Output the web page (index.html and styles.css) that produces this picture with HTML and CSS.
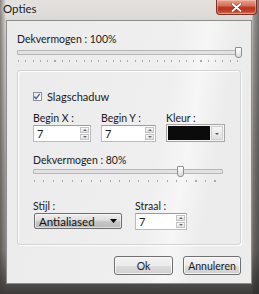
FILE: index.html
```html
<!DOCTYPE html>
<html lang="nl">
<head>
    <meta charset="UTF-8">
    <title>Opties</title>
    <link rel="stylesheet" href="styles.css">
</head>
<body>
    <div class="window">
        <div class="titlebar">
            <span class="title">Opties</span>
            <button class="close" type="button" aria-label="Sluiten">
                <svg width="11" height="9" viewBox="0 0 11 9">
                    <path d="M1.5 1 L9.5 8 M9.5 1 L1.5 8" stroke="#5a1a10" stroke-width="3" stroke-linecap="round" opacity="0.5"/>
                    <path d="M1.5 1 L9.5 8 M9.5 1 L1.5 8" stroke="#ffffff" stroke-width="1.8" stroke-linecap="round"/>
                </svg>
            </button>
        </div>

        <div class="client">
            <label class="caption">Dekvermogen : 100%</label>
            <div class="slider slider-wide">
                <div class="track"></div>
                <div class="thumb" style="left: 218px;"></div>
            </div>
            <div class="ticks ticks-wide"></div>

            <div class="group">
                <label class="check-row">
                    <span class="checkbox">
                        <svg width="9" height="9" viewBox="0 0 9 9"><path d="M1.5 4.5 L3.5 7 L7.5 1.5" stroke="#3a5f9a" stroke-width="1.4" fill="none"/></svg>
                    </span>
                    Slagschaduw
                </label>

                <div class="fields">
                    <div class="field">
                        <label class="caption">Begin X :</label>
                        <div class="spin spin-x">
                            <span class="value">7</span>
                            <span class="arrows"><i class="up"></i><i class="down"></i></span>
                        </div>
                    </div>
                    <div class="field">
                        <label class="caption">Begin Y :</label>
                        <div class="spin spin-y">
                            <span class="value">7</span>
                            <span class="arrows"><i class="up"></i><i class="down"></i></span>
                        </div>
                    </div>
                    <div class="field">
                        <label class="caption">Kleur :</label>
                        <div class="color-combo">
                            <span class="swatch"></span>
                            <span class="drop"><i class="down"></i></span>
                        </div>
                    </div>
                </div>

                <label class="caption caption-opacity">Dekvermogen : 80%</label>
                <div class="slider slider-inner">
                    <div class="track"></div>
                    <div class="thumb" style="left: 144px;"></div>
                </div>
                <div class="ticks ticks-inner"></div>

                <div class="fields fields-bottom">
                    <div class="field">
                        <label class="caption">Stijl :</label>
                        <div class="select">
                            <span>Antialiased</span>
                            <svg width="7" height="4" viewBox="0 0 7 4"><path d="M0 0 H7 L3.5 4 Z" fill="#000"/></svg>
                        </div>
                    </div>
                    <div class="field">
                        <label class="caption">Straal :</label>
                        <div class="spin spin-r">
                            <span class="value">7</span>
                            <span class="arrows"><i class="up"></i><i class="down"></i></span>
                        </div>
                    </div>
                </div>
            </div>

            <div class="actions">
                <button class="btn" type="button">Ok</button>
                <button class="btn" type="button">Annuleren</button>
            </div>
        </div>
    </div>
</body>
</html>
```

FILE: styles.css
```css
body {
    margin: 0;
    padding: 0;
    font-family: Lato, "Open Sans", sans-serif;
    font-size: 10.5px;
    color: #1a1a1a;
}
.window {
    width: 259px;
    height: 294px;
    box-sizing: border-box;
    padding: 0 7px 10px 6px;
    background:
        linear-gradient(90deg, rgba(60, 55, 50, 0.55) 0, rgba(60, 55, 50, 0.1) 5px, transparent 6px, transparent 252px, rgba(40, 40, 40, 0.35) 253px, rgba(40, 40, 40, 0.6) 259px),
        linear-gradient(180deg, #e4e2de 0, #d2cfcb 40px, #a9a5a1 150px, #8a8683 250px, #3c3b3a 294px);
    display: flex;
    flex-direction: column;
}
.titlebar {
    height: 20px;
    display: flex;
    align-items: flex-start;
    justify-content: space-between;
}
.title {
    font-size: 11.5px;
    margin: 2px 0 0 -3px;
    color: #1b1b1b;
    text-shadow: 0 0 6px rgba(255, 255, 255, 0.9);
}
.close {
    width: 41px;
    height: 15px;
    margin-right: -5px;
    padding: 0;
    border: 1px solid #7d3024;
    border-top: none;
    border-radius: 0 0 4px 4px;
    background: linear-gradient(180deg, #e7a291 0, #d4705a 40%, #b9341a 55%, #c2412a 80%, #d97459 100%);
    box-shadow: inset 0 0 0 1px rgba(255, 220, 210, 0.4);
    display: flex;
    align-items: center;
    justify-content: center;
}
.client {
    flex: 1;
    border: 1px solid #8c8c8c;
    background: linear-gradient(100deg, #ebebeb 0, #efefef 60%, #f6f6f6 70%, #ececec 80%);
    padding: 12px 9px 0 10px;
    display: flex;
    flex-direction: column;
}
.caption {
    display: block;
    line-height: 13px;
    height: 13px;
}
.caption-opacity {
    margin-top: 12px;
}
.slider {
    position: relative;
    height: 12px;
}
.slider-wide {
    width: 224px;
    margin-top: 1px;
}
.slider-inner {
    width: 190px;
    margin-top: -1px;
}
.track {
    position: absolute;
    left: 0;
    right: 0;
    top: 3px;
    height: 3px;
    border: 1px solid #b6b6b6;
    border-radius: 1px;
    background: #e2e2e2;
}
.thumb {
    position: absolute;
    top: 0;
    width: 5px;
    height: 9px;
    border: 1px solid #8e8e8e;
    border-radius: 1px 1px 3px 3px;
    background: linear-gradient(180deg, #ffffff, #dcdcdc);
}
.ticks {
    height: 2px;
    margin-top: 1px;
    background: repeating-linear-gradient(90deg, #a9a9a9 0, #a9a9a9 1px, transparent 1px, transparent 7.3px);
}
.ticks-wide {
    width: 222px;
    margin-left: 1px;
}
.ticks-inner {
    width: 190px;
    margin-left: 1px;
    margin-top: 2px;
    background: repeating-linear-gradient(90deg, #a9a9a9 0, #a9a9a9 1px, transparent 1px, transparent 9.5px);
}
.group {
    margin-top: 8px;
    width: 224px;
    height: 175px;
    box-sizing: border-box;
    border: 1px solid #d2d2d2;
    border-radius: 3px;
    box-shadow: inset 1px 1px 0 #ffffff, 1px 1px 0 #ffffff;
    padding: 18px 0 0 15px;
}
.check-row {
    display: flex;
    align-items: center;
    gap: 5px;
    height: 14px;
    font-size: 11px;
}
.checkbox {
    width: 9px;
    height: 9px;
    box-sizing: border-box;
    border: 1px solid #8f8f8f;
    background: linear-gradient(135deg, #e4e8ee, #ffffff);
    display: flex;
}
.checkbox svg {
    margin: -1px 0 0 -1px;
}
.fields {
    display: flex;
    gap: 10px;
    margin-top: 9px;
}
.fields-bottom {
    margin-top: 18px;
    gap: 13px;
}
.spin {
    height: 17px;
    box-sizing: border-box;
    border: 1px solid #b8bcc2;
    border-top-color: #9a9ea4;
    background: #ffffff;
    display: flex;
    align-items: center;
    justify-content: space-between;
    padding: 0 1px 0 3px;
    font-size: 11px;
}
.spin-x {
    width: 58px;
}
.spin-y {
    width: 55px;
}
.spin-r {
    width: 52px;
}
.value {
    line-height: 14px;
}
.arrows {
    width: 9px;
    height: 13px;
    display: flex;
    flex-direction: column;
    gap: 1px;
}
.arrows i {
    flex: 1;
    border: 1px solid #c4c4c4;
    background: linear-gradient(180deg, #f7f7f7, #e2e2e2);
    position: relative;
}
.arrows i::after,
.drop i::after {
    content: "";
    position: absolute;
    left: 2px;
    top: 1px;
    border-left: 2px solid transparent;
    border-right: 2px solid transparent;
}
.arrows .up::after {
    border-bottom: 2px solid #6a6a6a;
}
.arrows .down::after {
    border-top: 2px solid #6a6a6a;
}
.color-combo {
    width: 59px;
    height: 18px;
    box-sizing: border-box;
    border: 1px solid #a6a6a6;
    background: #f4f4f4;
    display: flex;
    padding: 1px;
    gap: 1px;
    margin-top: -1px;
}
.swatch {
    flex: 1;
    background: #0b0b0b;
}
.drop {
    width: 12px;
    border: 1px solid #cfcfcf;
    box-sizing: border-box;
    background: linear-gradient(180deg, #f6f6f6, #e0e0e0);
    position: relative;
}
.drop i::after {
    left: 3px;
    top: 6px;
    border-top: 2px solid #555;
}
.select {
    width: 88px;
    height: 16px;
    box-sizing: border-box;
    margin-left: 1px;
    border: 1px solid #6f6f6f;
    border-radius: 2px;
    background: linear-gradient(180deg, #eeeeee 0, #dedede 45%, #c6c6c6 55%, #b9b9b9 100%);
    box-shadow: inset 0 0 0 1px rgba(255, 255, 255, 0.5);
    display: flex;
    align-items: center;
    justify-content: space-between;
    padding: 0 4px 0 4px;
    font-size: 11.5px;
    color: #111;
}
.actions {
    display: flex;
    justify-content: flex-end;
    gap: 10px;
    margin-top: 11px;
    width: 224px;
}
.btn {
    width: 59px;
    height: 19px;
    padding: 0;
    font-family: inherit;
    font-size: 10.5px;
    color: #1a1a1a;
    border: 1px solid #707070;
    border-radius: 3px;
    background: linear-gradient(180deg, #f2f2f2 0, #ebebeb 50%, #dddddd 51%, #cfcfcf 100%);
    box-shadow: inset 0 0 0 1px rgba(255, 255, 255, 0.7);
}
.btn + .btn {
    width: 58px;
}
```
